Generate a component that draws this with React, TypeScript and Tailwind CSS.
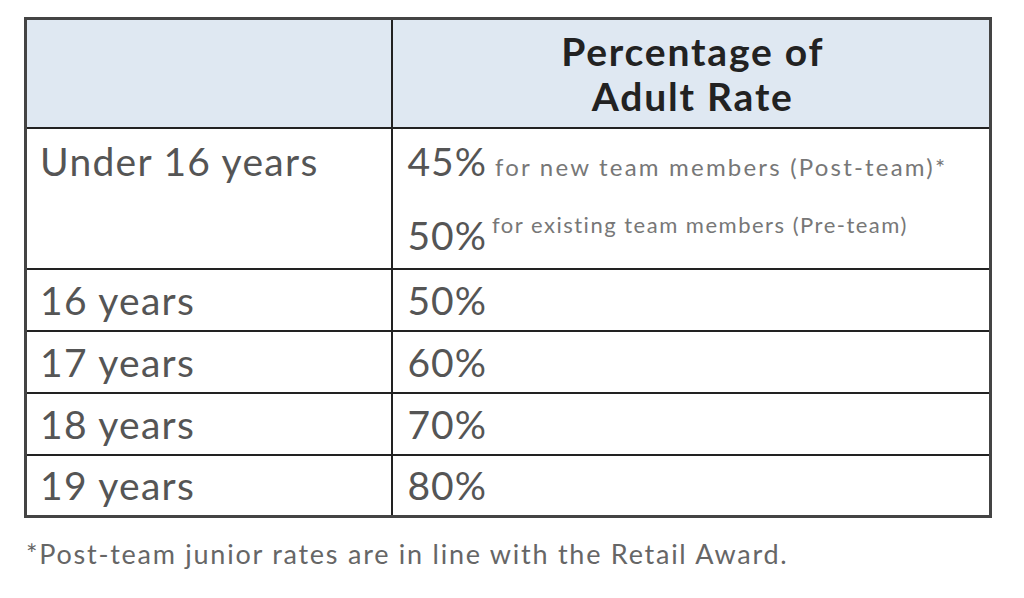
const rows = [
  { age: '16 years', rate: '50%' },
  { age: '17 years', rate: '60%' },
  { age: '18 years', rate: '70%' },
  { age: '19 years', rate: '80%' },
]

export default function App() {
  return (
    <div className="min-h-[598px] w-[1024px] bg-white pl-[24px] pt-[17px] font-['Lato',sans-serif] text-[#555]">
      <table className="w-[968px] table-fixed border-collapse border-[3px] border-[#444]">
        <colgroup>
          <col className="w-[366px]" />
          <col />
        </colgroup>
        <thead>
          <tr className="h-[109px] bg-[#dfe8f2]">
            <th className="border-2 border-[#222]" />
            <th className="border-2 border-[#222] pl-[4px] pt-[2px] text-center text-[39px] font-bold leading-[45px] tracking-[1.8px] text-[#222]">
              Percentage of
              <br />
              Adult Rate
            </th>
          </tr>
        </thead>
        <tbody>
          <tr className="h-[141px] align-top">
            <td className="border-2 border-[#222] pl-[13px] pt-[10px] text-[39px] leading-[44px] tracking-[1.3px]">
              Under 16 years
            </td>
            <td className="border-2 border-[#222] pl-[15px] pt-[10px]">
              <div className="flex items-baseline gap-[8px]">
                <span className="text-[39px] leading-[44px] tracking-[1px]">45%</span>
                <span className="text-[24px] tracking-[2.2px] text-[#777]">
                  for new team members (Post-team)*
                </span>
              </div>
              <div className="mt-[28px] flex items-start gap-[5px]">
                <span className="text-[39px] leading-[44px] tracking-[1px]">50%</span>
                <span className="text-[22px] leading-[24px] tracking-[1.5px] text-[#777]">
                  for existing team members (Pre-team)
                </span>
              </div>
            </td>
          </tr>
          {rows.map((row) => (
            <tr key={row.age} className="h-[62px]">
              <td className="border-2 border-[#222] pl-[13px] text-[39px] leading-[44px] tracking-[1.3px]">
                {row.age}
              </td>
              <td className="border-2 border-[#222] pl-[15px] text-[39px] leading-[44px] tracking-[1px]">
                {row.rate}
              </td>
            </tr>
          ))}
        </tbody>
      </table>
      <p className="mt-[20px] pl-[2px] text-[27px] leading-[32px] tracking-[1.75px] text-[#666]">
        *Post-team junior rates are in line with the Retail Award.
      </p>
    </div>
  )
}
